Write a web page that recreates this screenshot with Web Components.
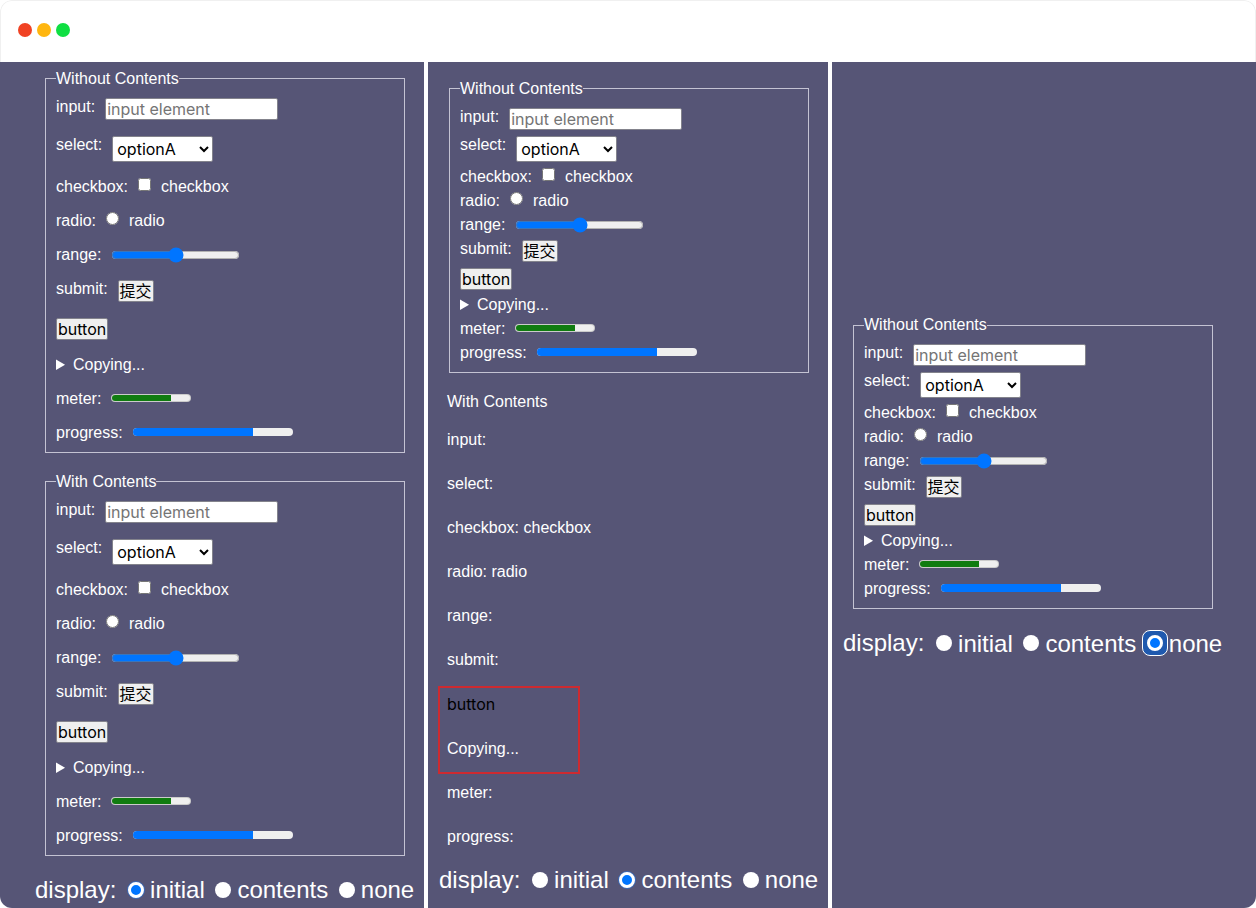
<!DOCTYPE html>
<html lang="zh-CN">
<head>
<meta charset="utf-8">
<title>display: contents</title>
<style>
  body {
    margin: 0;
    background: #fff;
    font: 16px/18px "Liberation Sans", "Noto Sans CJK SC", sans-serif;
    color: #fff;
  }
</style>
</head>
<body>
<browser-window>
  <demo-panel class="first">
    <control-list caption="Without Contents" roomy></control-list>
    <control-list caption="With Contents" roomy></control-list>
    <display-switch value="initial"></display-switch>
  </demo-panel>
  <demo-panel>
    <control-list caption="Without Contents"></control-list>
    <contents-list></contents-list>
    <display-switch value="contents"></display-switch>
  </demo-panel>
  <demo-panel>
    <control-list caption="Without Contents"></control-list>
    <display-switch value="none" focused></display-switch>
  </demo-panel>
</browser-window>

<script>
(function () {
  const createTemplate = (html) => {
    const template = document.createElement('template');
    template.innerHTML = html;
    return template;
  };

  const windowTemplate = createTemplate(`
    <style>
      :host {
        display: flex;
        flex-direction: column;
        box-sizing: border-box;
        min-height: 100vh;
        overflow: hidden;
        border-radius: 12px;
        background: #fff;
      }

      header {
        display: flex;
        align-items: center;
        gap: 5px;
        box-sizing: border-box;
        height: 62px;
        padding: 0 18px 4px 17px;
        border: 1px solid #f0f0f0;
        border-bottom: 0;
        border-radius: 12px 12px 0 0;
      }

      i {
        width: 14px;
        height: 14px;
        border-radius: 50%;
      }

      .close { background: #f04223; }
      .minimize { background: #ffb60f; }
      .zoom { background: #0fdf42; }

      main {
        flex: 1;
        display: grid;
        grid-template-columns: 424fr 400fr 424fr;
        gap: 4px;
      }
    </style>
    <header>
      <i class="close"></i>
      <i class="minimize"></i>
      <i class="zoom"></i>
    </header>
    <main><slot></slot></main>
  `);

  class BrowserWindow extends HTMLElement {
    constructor() {
      super();
      this.attachShadow({ mode: 'open' });
      this.shadowRoot.append(windowTemplate.content.cloneNode(true));
    }
  }

  const panelTemplate = createTemplate(`
    <style>
      :host {
        display: flex;
        flex-direction: column;
        justify-content: center;
        gap: 20px;
        padding: 3px 9px 0 11px;
        background: #565576;
      }

      :host(.first) {
        padding-left: 35px;
      }
    </style>
    <slot></slot>
  `);

  class DemoPanel extends HTMLElement {
    constructor() {
      super();
      this.attachShadow({ mode: 'open' });
      this.shadowRoot.append(panelTemplate.content.cloneNode(true));
    }
  }

  const controlTemplate = createTemplate(`
    <style>
      :host {
        display: block;
        max-width: 360px;
        padding: 0 10px;
        --gap: 6px;
      }

      :host([roomy]) {
        --gap: 16px;
      }

      fieldset {
        min-width: 0;
        margin: 0;
        padding: 10px;
        border: 1px solid #c4c3d3;
      }

      legend {
        padding: 0;
      }

      .rows {
        display: flex;
        flex-direction: column;
        gap: var(--gap);
      }

      .row {
        display: flex;
        align-items: flex-start;
        gap: 10px;
      }

      input, select, button, meter, progress {
        box-sizing: border-box;
        margin: 0;
        font: 16px/18px Inter, "Noto Sans CJK SC", sans-serif;
        accent-color: #0075ff;
      }

      .text {
        width: 173px;
        height: 22px;
        padding: 1px;
        border: 1px solid #83838c;
        border-radius: 2px;
        background: #fff;
      }

      .text::placeholder {
        color: #757575;
      }

      select {
        width: 101px;
        height: 26px;
        padding: 0;
        border: 1px solid #83838c;
        border-radius: 2px;
        background: #fff;
        color: #000;
      }

      button, .submit {
        height: 22px;
        padding: 0 1px;
        border: 1px solid #83838c;
        border-radius: 2px;
        background: #efefef;
        color: #000;
      }

      input[type="range"] {
        margin-top: 1px;
      }

      meter {
        width: 80px;
        height: 16px;
      }

      progress {
        appearance: none;
        overflow: hidden;
        width: 160px;
        height: 8px;
        margin-top: 4px;
        border: 0;
        border-radius: 4px;
      }

      progress::-webkit-progress-bar {
        background: #efefef;
      }

      progress::-webkit-progress-value {
        background: #0075ff;
      }
    </style>
    <fieldset>
      <legend></legend>
      <div class="rows">
        <div class="row"><label for="text">input:</label><input id="text" class="text" type="text" placeholder="input element"></div>
        <div class="row"><label for="select">select:</label><select id="select"><option>optionA</option><option>optionB</option></select></div>
        <div class="row"><span>checkbox:</span><input id="checkbox" type="checkbox"><label for="checkbox">checkbox</label></div>
        <div class="row"><span>radio:</span><input id="radio" type="radio"><label for="radio">radio</label></div>
        <div class="row"><label for="range">range:</label><input id="range" type="range"></div>
        <div class="row"><label for="submit">submit:</label><input id="submit" class="submit" type="submit" value="提交"></div>
        <div class="row"><button type="button">button</button></div>
        <details><summary>Copying...</summary></details>
        <div class="row"><label for="meter">meter:</label><meter id="meter" value="0.75"></meter></div>
        <div class="row"><label for="progress">progress:</label><progress id="progress" value="75" max="100"></progress></div>
      </div>
    </fieldset>
  `);

  class ControlList extends HTMLElement {
    constructor() {
      super();
      this.attachShadow({ mode: 'open' });
      this.shadowRoot.append(controlTemplate.content.cloneNode(true));
    }

    connectedCallback() {
      this.shadowRoot.querySelector('legend').textContent = this.getAttribute('caption');
    }
  }

  const contentsTemplate = createTemplate(`
    <style>
      :host {
        display: flex;
        flex-direction: column;
        gap: 26px;
        padding-left: 8px;
      }

      .caption {
        margin-bottom: -6px;
      }

      .marked {
        position: relative;
        display: flex;
        flex-direction: column;
        align-items: flex-start;
        gap: 26px;
      }

      /* red frame around the two rows that keep their text */
      .marked::before {
        content: '';
        position: absolute;
        inset: -9px auto -16px -9px;
        box-sizing: border-box;
        width: 142px;
        border: 2px solid #cd2a30;
        pointer-events: none;
      }

      button {
        padding: 0;
        border: 0;
        background: none;
        font: 16px/19px Inter, sans-serif;
        color: #000;
      }
    </style>
    <div class="caption">With Contents</div>
    <div>input:</div>
    <div>select:</div>
    <div>checkbox: checkbox</div>
    <div>radio: radio</div>
    <div>range:</div>
    <div>submit:</div>
    <div class="marked">
      <button type="button">button</button>
      <div>Copying...</div>
    </div>
    <div>meter:</div>
    <div>progress:</div>
  `);

  class ContentsList extends HTMLElement {
    constructor() {
      super();
      this.attachShadow({ mode: 'open' });
      this.shadowRoot.append(contentsTemplate.content.cloneNode(true));
    }
  }

  const switchTemplate = createTemplate(`
    <style>
      :host {
        position: relative;
        z-index: 0;
        display: block;
        font-size: 24px;
        line-height: 27px;
        white-space: nowrap;
      }

      span {
        margin-right: 1px;
      }

      label {
        position: relative;
        display: inline-flex;
        align-items: center;
        gap: 6px;
        margin-left: 4px;
      }

      input {
        appearance: none;
        box-sizing: border-box;
        width: 16px;
        height: 16px;
        margin: 0;
        border-radius: 50%;
        background: #fff;
      }

      input:checked {
        border: 3px solid #fff;
        background: #0075ff;
        box-shadow: 0 0 0 1px #3a6ab8;
      }

      :host([focused]) input:checked {
        box-shadow: none;
      }

      /* focus ring, drawn under the radio */
      :host([focused]) input:checked::before {
        content: '';
        position: absolute;
        z-index: -1;
        left: -5px;
        top: 50%;
        box-sizing: border-box;
        width: 26px;
        height: 26px;
        margin-top: -13px;
        border: 1px solid #fff;
        border-radius: 8px;
        background: #1f59ae;
      }
    </style>
    <span>display:</span>
    <label><input type="radio" name="display" value="initial">initial</label>
    <label><input type="radio" name="display" value="contents">contents</label>
    <label><input type="radio" name="display" value="none">none</label>
  `);

  class DisplaySwitch extends HTMLElement {
    constructor() {
      super();
      this.attachShadow({ mode: 'open' });
      this.shadowRoot.append(switchTemplate.content.cloneNode(true));
    }

    connectedCallback() {
      this.value = this.getAttribute('value');
    }

    set value(value) {
      this.shadowRoot.querySelector(`input[value="${value}"]`).checked = true;
    }

    get value() {
      return this.shadowRoot.querySelector('input:checked').value;
    }
  }

  customElements.define('browser-window', BrowserWindow);
  customElements.define('demo-panel', DemoPanel);
  customElements.define('control-list', ControlList);
  customElements.define('contents-list', ContentsList);
  customElements.define('display-switch', DisplaySwitch);
})();
</script>
</body>
</html>
